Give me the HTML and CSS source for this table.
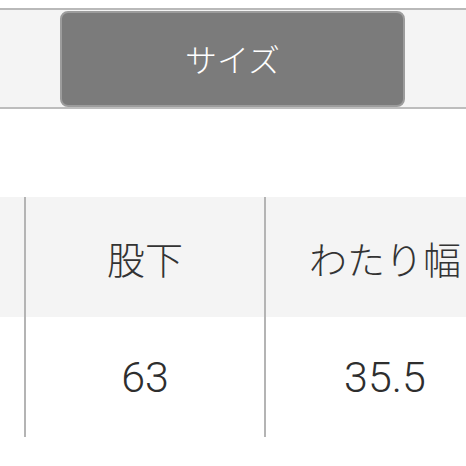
FILE: index.html
```html
<!DOCTYPE html>
<html lang="ja">
<head>
<meta charset="utf-8">
<link rel="stylesheet" href="styles.css">
</head>
<body>
<div class="tabbar">
  <div class="tab">サイズ</div>
</div>
<div class="table">
  <div class="row head">
    <div class="cell edge"></div>
    <div class="cell">股下</div>
    <div class="cell">わたり幅</div>
  </div>
  <div class="row">
    <div class="cell edge"></div>
    <div class="cell num">63</div>
    <div class="cell num">35.5</div>
  </div>
</div>
</body>
</html>
```
FILE: styles.css
```css
html, body {
  margin: 0;
  padding: 0;
  background: #ffffff;
  width: 466px;
  height: 466px;
  overflow: hidden;
  font-family: "Noto Sans CJK JP", sans-serif;
}
.tabbar {
  margin-top: 8px;
  height: 97px;
  background: #f4f4f4;
  border-top: 2px solid #b9b9b9;
  border-bottom: 2px solid #bdbdbd;
  display: flex;
  align-items: flex-end;
  padding-left: 60px;
}
.tab {
  box-sizing: border-box;
  width: 345px;
  height: 96px;
  background: #7b7b7b;
  border: 2px solid #9c9c9c;
  border-radius: 8px;
  color: #ffffff;
  font-size: 32px;
  font-weight: 300;
  display: flex;
  align-items: center;
  justify-content: center;
  padding-bottom: 3px;
}
.table {
  margin-top: 88px;
  width: 466px;
  overflow: hidden;
}
.row {
  display: flex;
  height: 120px;
}
.row.head {
  background: #f4f4f4;
}
.cell {
  box-sizing: border-box;
  width: 240px;
  flex: none;
  border-left: 2px solid #b4b4b4;
  display: flex;
  align-items: center;
  justify-content: center;
  font-size: 38px;
  font-weight: 300;
  color: #333333;
}
.cell.edge {
  width: 24px;
  border-left: none;
}
.cell.num {
  font-family: Roboto, "Noto Sans CJK JP", sans-serif;
  font-size: 43px;
  color: #2e2e2e;
}
```
